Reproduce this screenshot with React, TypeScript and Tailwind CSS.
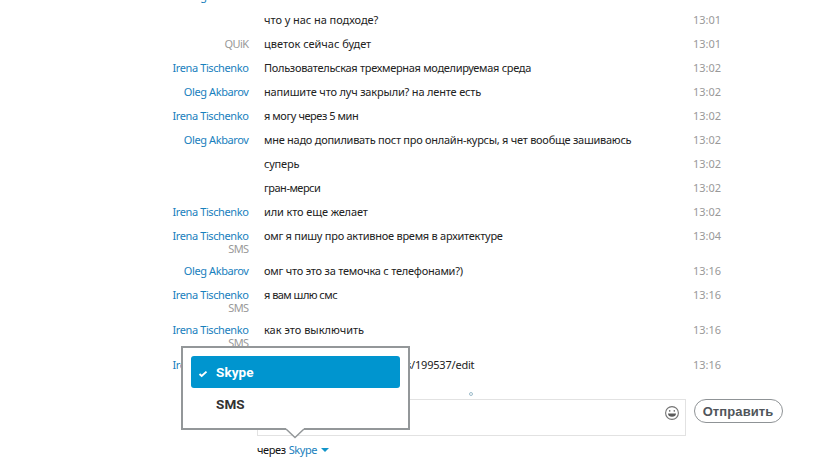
import clsx from 'clsx';

type Message = {
  author?: string;
  muted?: boolean;
  via?: string;
  text: string;
  time: string;
  fit?: string;
};

const messages: Message[] = [
  { author: 'Oleg Akbarov', text: '', time: '' },
  { text: 'что у нас на подходе?', time: '13:01', fit: 'tracking-[-0.05px]' },
  { author: 'QUiK', muted: true, text: 'цветок сейчас будет', time: '13:01' },
  { author: 'Irena Tischenko', text: 'Пользовательская трехмерная моделируемая среда', time: '13:02', fit: 'tracking-[-0.3px]' },
  { author: 'Oleg Akbarov', text: 'напишите что луч закрыли? на ленте есть', time: '13:02', fit: 'tracking-[-0.18px]' },
  { author: 'Irena Tischenko', text: 'я могу через 5 мин', time: '13:02', fit: 'tracking-[-0.44px]' },
  { author: 'Oleg Akbarov', text: 'мне надо допиливать пост про онлайн-курсы, я чет вообще зашиваюсь', time: '13:02', fit: 'tracking-[-0.26px]' },
  { text: 'суперь', time: '13:02', fit: 'tracking-[-0.2px]' },
  { text: 'гран-мерси', time: '13:02', fit: 'tracking-[-0.5px]' },
  { author: 'Irena Tischenko', text: 'или кто еще желает', time: '13:02', fit: 'tracking-[-0.12px]' },
  { author: 'Irena Tischenko', via: 'SMS', text: 'омг я пишу про активное время в архитектуре', time: '13:04', fit: 'tracking-[-0.26px]' },
  { author: 'Oleg Akbarov', text: 'омг что это за темочка с телефонами?)', time: '13:16', fit: 'tracking-[-0.23px]' },
  { author: 'Irena Tischenko', via: 'SMS', text: 'я вам шлю смс', time: '13:16', fit: 'tracking-[-0.54px]' },
  { author: 'Irena Tischenko', via: 'SMS', text: 'как это выключить', time: '13:16' },
  { author: 'Irena Tischenko', text: 's/199537/edit', time: '13:16', fit: 'pl-[142px] tracking-[-0.2px]' },
];

function MessageRow({ message }: { message: Message }) {
  return (
    <div className={clsx('flex pt-[5px] leading-[13px]', message.via ? 'h-[35px]' : 'h-6')}>
      <div className="w-[248.500px] shrink-0 text-right tracking-[-0.39px]">
        <div className={message.muted ? 'tracking-[-0.6px] text-[#999]' : 'text-[#1880bd]'}>{message.author}</div>
        {message.via ? <div className="tracking-[-0.6px] text-[#999]">{message.via}</div> : null}
      </div>
      <div className={clsx('ml-[15.500px] w-[429px] shrink-0 whitespace-nowrap text-[#222]', message.fit)}>
        {message.text}
      </div>
      <div className="text-[#999]">{message.time}</div>
    </div>
  );
}

function SmileIcon() {
  return (
    <svg className="size-[14px]" viewBox="0 0 14 14" fill="none">
      <circle cx="7" cy="7" r="6.400" stroke="#737373" strokeWidth="1.1" />
      <circle cx="4.7" cy="4.9" r="0.800" fill="#666" />
      <circle cx="9.3" cy="4.9" r="0.800" fill="#666" />
      <path d="M3 7.5h8c-.1 2.200-1.500 3.300-4 3.300s-3.900-1.100-4-3.300z" fill="#5a5a5a" />
    </svg>
  );
}

function ViaMenu() {
  return (
    <div className="absolute top-[346px] left-[181px] h-[84px] w-[229px] border-2 border-[#939799] bg-white p-2 font-['Roboto',sans-serif] text-[13.500px] font-bold tracking-[0.1px]">
      <div className="flex h-8 items-center rounded-[3px] bg-[#0095cf] text-white">
        <svg className="mt-1 mr-2 ml-[7px] h-[10px] w-[10px]" viewBox="0 0 10 10" fill="none">
          <path d="M1.500 5l2.200 2L8.500 2.600" stroke="#fff" strokeWidth="1.900" />
        </svg>
        <span className="pt-px">Skype</span>
      </div>
      <div className="flex h-8 items-center pt-px pl-[25px] text-[#333]">SMS</div>
      <svg className="absolute top-[80px] left-[102px] h-[12px] w-[20px]" viewBox="0 0 20 12" fill="none">
        <path d="M1 0h18v2L10 9.500 1 2z" fill="#fff" />
        <path d="M1 1l9 8.500L19 1" stroke="#939799" strokeWidth="1.500" />
      </svg>
    </div>
  );
}

export default function App() {
  return (
    <div className="relative h-[462px] w-[834px] overflow-hidden bg-white font-['Noto_Sans',sans-serif] text-[11px]">
      <div className="-mt-4">
        {messages.map((message, i) => (
          <MessageRow key={i} message={message} />
        ))}
      </div>

      <div className="mt-[22px] ml-[257px] flex">
        <div className="flex h-[37px] w-[429px] justify-end border border-[#e2e2e2] pt-[6px] pr-[6px]">
          <SmileIcon />
        </div>
        <button className="ml-2 h-6 w-[89px] rounded-full border border-[#8f9396] pr-px font-['Liberation_Sans',sans-serif] text-[13px] leading-[23px] font-bold tracking-[0.1px] text-[#50555a]">
          Отправить
        </button>
      </div>

      <div className="mt-[7px] ml-[257px] flex items-center leading-[13px] tracking-[-0.4px] text-[#111]">
        через
        <span className="ml-[3px] text-[#1880bd]">Skype</span>
        <svg className="ml-1 h-1 w-2" viewBox="0 0 8 4">
          <path d="M0 0h8L4 4z" fill="#1295c9" />
        </svg>
      </div>

      <div className="absolute top-[392px] left-[469px] size-[4px] rounded-full border border-[#9dbccb]" />
      <ViaMenu />
    </div>
  );
}
